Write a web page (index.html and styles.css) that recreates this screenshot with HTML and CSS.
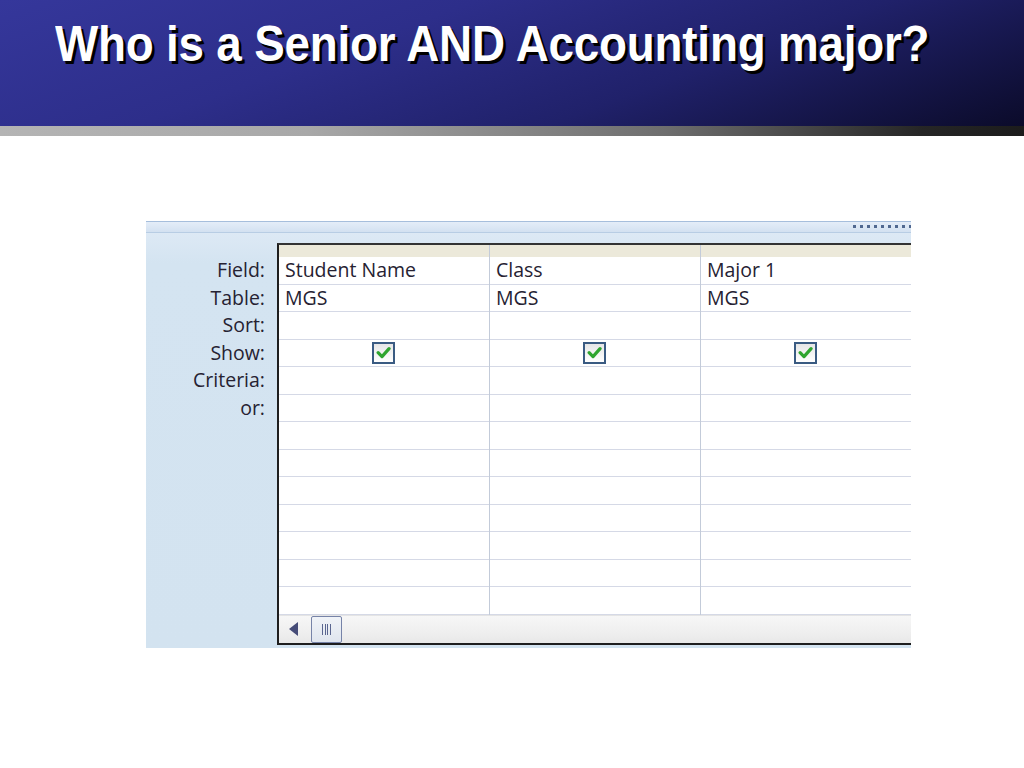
FILE: index.html
```html
<!DOCTYPE html>
<html>
<head>
<meta charset="utf-8">
<link rel="stylesheet" href="styles.css">
</head>
<body>
<header class="banner">
  <h1 class="title">Who is a Senior AND Accounting major?</h1>
</header>
<div class="rule"></div>
<main class="content">
  <div class="shot">
    <div class="topbar"><span class="grip"></span></div>
    <div class="body">
      <div class="labels">
        <div class="lbl">Field:</div>
        <div class="lbl">Table:</div>
        <div class="lbl">Sort:</div>
        <div class="lbl">Show:</div>
        <div class="lbl">Criteria:</div>
        <div class="lbl">or:</div>
      </div>
      <div class="grid">
        <div class="cols">
          <div class="col">
            <div class="head"></div>
            <div class="cell">Student Name</div>
            <div class="cell">MGS</div>
            <div class="cell"></div>
            <div class="cell center"><span class="check"><svg viewBox="0 0 14 14" width="15" height="15"><path d="M2 7.2 L5.6 10.8 L12.2 3.4" fill="none" stroke="#2fa52f" stroke-width="3" stroke-linecap="round" stroke-linejoin="round"/></svg></span></div>
            <div class="cell"></div><div class="cell"></div><div class="cell"></div><div class="cell"></div><div class="cell"></div><div class="cell"></div><div class="cell"></div><div class="cell"></div><div class="cell"></div>
          </div>
          <div class="col">
            <div class="head"></div>
            <div class="cell">Class</div>
            <div class="cell">MGS</div>
            <div class="cell"></div>
            <div class="cell center"><span class="check"><svg viewBox="0 0 14 14" width="15" height="15"><path d="M2 7.2 L5.6 10.8 L12.2 3.4" fill="none" stroke="#2fa52f" stroke-width="3" stroke-linecap="round" stroke-linejoin="round"/></svg></span></div>
            <div class="cell"></div><div class="cell"></div><div class="cell"></div><div class="cell"></div><div class="cell"></div><div class="cell"></div><div class="cell"></div><div class="cell"></div><div class="cell"></div>
          </div>
          <div class="col">
            <div class="head"></div>
            <div class="cell">Major 1</div>
            <div class="cell">MGS</div>
            <div class="cell"></div>
            <div class="cell center"><span class="check"><svg viewBox="0 0 14 14" width="15" height="15"><path d="M2 7.2 L5.6 10.8 L12.2 3.4" fill="none" stroke="#2fa52f" stroke-width="3" stroke-linecap="round" stroke-linejoin="round"/></svg></span></div>
            <div class="cell"></div><div class="cell"></div><div class="cell"></div><div class="cell"></div><div class="cell"></div><div class="cell"></div><div class="cell"></div><div class="cell"></div><div class="cell"></div>
          </div>
        </div>
        <div class="scroll">
          <span class="arrow"></span>
          <span class="thumb"><span class="lines"></span></span>
        </div>
      </div>
    </div>
  </div>
</main>
</body>
</html>
```

FILE: styles.css
```css
html, body {
  margin: 0;
  padding: 0;
  background: #ffffff;
}

.banner {
  height: 126px;
  background: linear-gradient(160deg, #35379b 0%, #2d2e8a 35%, #20216a 65%, #0b0b2a 100%);
  box-sizing: border-box;
  padding: 14px 0 0 55px;
  overflow: hidden;
}

.title {
  margin: 0;
  font-family: "Liberation Sans", Arial, sans-serif;
  font-weight: bold;
  font-size: 50px;
  letter-spacing: -0.2px;
  color: #ffffff;
  text-shadow: 3px 3px 0 #000000;
  line-height: 60px;
  white-space: nowrap;
  transform: scaleX(0.915);
  transform-origin: left center;
}

.rule {
  height: 10px;
  background: linear-gradient(90deg, #b4b4b4 0%, #a8a8a8 30%, #6e6e6e 65%, #262626 90%, #1c1c1c 100%);
}

.content {
  padding: 85px 0 0 146px;
}

.shot {
  width: 765px;
  height: 427px;
  display: flex;
  flex-direction: column;
  background: #d6e5f2;
  overflow: hidden;
}

.topbar {
  height: 12px;
  flex: none;
  box-sizing: border-box;
  border-top: 1px solid #a6bedc;
  border-bottom: 1px solid #b8cde4;
  background: linear-gradient(180deg, #e4edf8 0%, #d3e1f1 100%);
  display: flex;
  justify-content: flex-end;
  align-items: flex-start;
}

.grip {
  width: 58px;
  height: 3px;
  margin-top: 3px;
  background: repeating-linear-gradient(90deg, #506890 0 3px, transparent 3px 7px);
}

.body {
  flex: 1;
  display: flex;
  background: linear-gradient(180deg, #dde9f5 0px, #d4e4f1 30px, #d3e3f0 100%);
}

.labels {
  width: 131px;
  flex: none;
  box-sizing: border-box;
  padding: 24px 12px 0 0;
  font-family: "Open Sans", "Noto Sans", sans-serif;
  font-size: 19.5px;
  color: #262232;
  text-align: right;
}

.lbl {
  height: 27.5px;
  line-height: 25px;
}

.grid {
  flex: 1;
  margin-top: 10px;
  border-left: 2px solid #1e1e1e;
  border-top: 2px solid #333333;
  border-bottom: 2px solid #1e1e1e;
  background: #ffffff;
  display: flex;
  flex-direction: column;
  margin-bottom: 3px;
}

.cols {
  display: flex;
}

.col {
  width: 211px;
  flex: none;
  box-sizing: border-box;
  border-right: 1px solid #c3cbd9;
}

.head {
  height: 12px;
  background: #ece9da;
}

.cell {
  height: 27.5px;
  box-sizing: border-box;
  border-bottom: 1px solid #d5d9e6;
  padding-left: 6px;
  font-family: "Open Sans", "Noto Sans", sans-serif;
  font-size: 19.5px;
  color: #262232;
  line-height: 25px;
}

.cell.center {
  display: flex;
  justify-content: center;
  align-items: center;
  padding-left: 0;
  padding-right: 2px;
}

.check {
  width: 19px;
  height: 18px;
  border: 2px solid #3a5b82;
  background: linear-gradient(180deg, #e6e6e6 0%, #ffffff 100%);
  display: flex;
  align-items: center;
  justify-content: center;
}

.scroll {
  flex: 1;
  display: flex;
  align-items: center;
  gap: 13px;
  padding-left: 10px;
  border-top: 1px solid #e4e4e4;
  background: linear-gradient(180deg, #f7f7f7 0%, #efefef 60%, #e8e8e8 100%);
}

.arrow {
  width: 0;
  height: 0;
  border-top: 7px solid transparent;
  border-bottom: 7px solid transparent;
  border-right: 9px solid #464c78;
}

.thumb {
  width: 29px;
  height: 25px;
  border: 1px solid #7683a8;
  border-radius: 2px;
  background: linear-gradient(180deg, #f0f3f8 0%, #dfe5ee 100%);
  display: flex;
  align-items: center;
  justify-content: center;
}

.lines {
  width: 10px;
  height: 11px;
  background: repeating-linear-gradient(90deg, #5a6690 0 1px, transparent 1px 2.5px);
}
```
